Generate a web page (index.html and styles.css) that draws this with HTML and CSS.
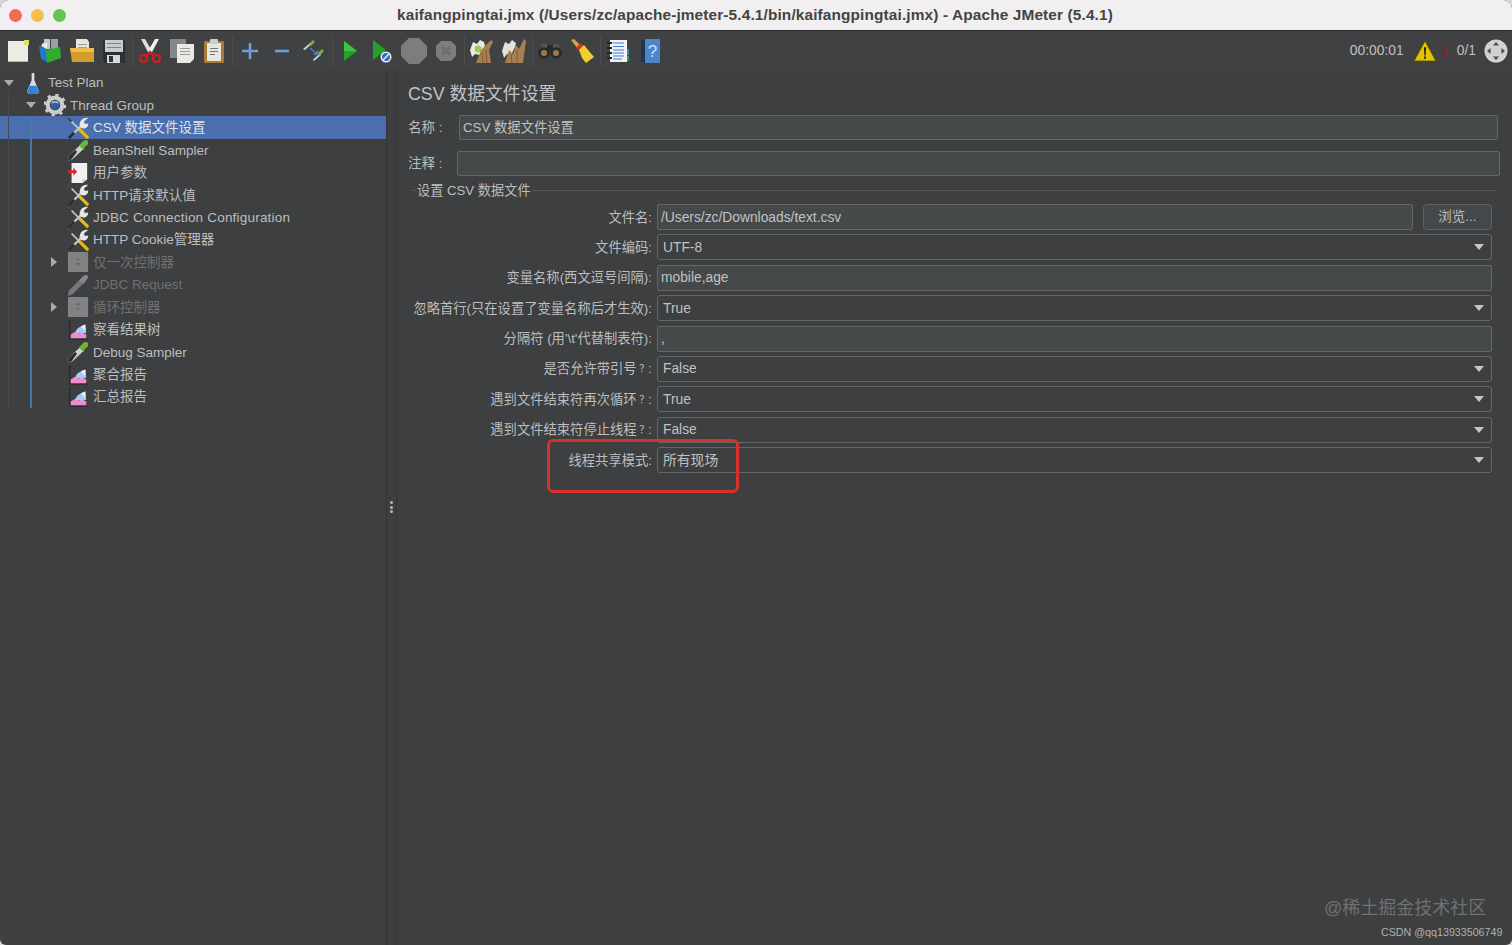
FILE: index.html
```html
<!DOCTYPE html>
<html lang="zh">
<head>
<meta charset="utf-8">
<title>Apache JMeter</title>
<link rel="stylesheet" href="styles.css">
</head>
<body>
<svg class="defs" width="0" height="0" aria-hidden="true">
  <defs>
    <symbol id="i-tools" viewBox="0 0 24 24">
      <path d="M1 1 L12 12" stroke="#c9cbcc" stroke-width="1.800" fill="none"/>
      <path d="M1 1 L5 5" stroke="#333" stroke-width="2" fill="none"/>
      <path d="M13 13 L22 22" stroke="#e8b81a" stroke-width="3.600" stroke-linecap="round" fill="none"/>
      <path d="M3 22 L16 9" stroke="#c6c8c9" stroke-width="2.400" fill="none"/>
      <path d="M3 22 L7 18" stroke="#2c2c2c" stroke-width="3" stroke-linecap="round" fill="none"/>
      <path d="M14 10 C13 5 17 0 23 1 L18.500 5 L19.500 7.500 L23 7 C23.500 12 18 14 15 11.500 Z" fill="#e6e6e6"/>
    </symbol>
    <symbol id="i-dropper" viewBox="0 0 24 24">
      <path d="M14 7 L18 11 L6 22 L1 24 L2 18 Z" fill="#cfd0d0"/>
      <path d="M2 18 L9 12 L11 14 L5 22 L1 24 Z" fill="#2e2e2e"/>
      <path d="M13 7 L18 2 C20 0 24 1 23 4 C23 6 22 7 20 8 L18 12 Z" fill="#6cb33f"/>
    </symbol>
    <symbol id="i-graph" viewBox="0 0 24 24">
      <path d="M3 1 V22 H23" fill="none" stroke="#2b2b2b" stroke-width="1.500"/>
      <path d="M4 21 V17 L9 14 L13 16 L17 15 L21 17 V21 Z" fill="#f08bd0"/>
      <path d="M9 15 C10 10 15 8 20 6 L21 15 L15 16 Z" fill="#a9c8f2"/>
      <path d="M15 8 L20 6 V13 Z" fill="#e6f0ff"/>
    </symbol>
    <symbol id="i-disabled-box" viewBox="0 0 24 24">
      <rect x="1" y="1" width="22" height="22" rx="1" fill="#808283"/>
      <rect x="10" y="8" width="4" height="2" fill="#6a6c6d"/>
      <rect x="10" y="13" width="4" height="2" fill="#6a6c6d"/>
    </symbol>
    <symbol id="i-disabled-dropper" viewBox="0 0 24 24">
      <path d="M14 6 L18 10 L6 22 L1 24 L2 18 Z" fill="#75777a"/>
      <path d="M13 7 L18 2 C20 0 24 1 23 4 L18 11 Z" fill="#85878a"/>
    </symbol>
  </defs>
</svg>
<div class="app">
  <header class="titlebar">
    <div class="lights">
      <span class="light light-red"></span>
      <span class="light light-yellow"></span>
      <span class="light light-green"></span>
    </div>
    <div class="window-title">kaifangpingtai.jmx (/Users/zc/apache-jmeter-5.4.1/bin/kaifangpingtai.jmx) - Apache JMeter (5.4.1)</div>
  </header>

  <div class="toolbar">
    <div class="tool"><svg viewBox="0 0 24 24"><path d="M2 2 H19 L22 5 V23 H2 Z" fill="#ecebe4"/><path d="M18 1 H23 V6 H18 Z" fill="#dfe06a"/><path d="M2 22 H22 V23 H2 Z" fill="#b5b5ad"/></svg></div>
    <div class="tool"><svg viewBox="0 0 24 24"><rect x="6" y="0" width="6" height="10" fill="#c4cacd"/><rect x="13" y="0" width="7" height="10" fill="#9aa1a6"/><path d="M1 7 L9 10 V23 L3 20 Z" fill="#1f78c9"/><path d="M8 11 L22 8 L23 19 L9 24 Z" fill="#2fae2d"/><path d="M5 4 L9 4 L9 10 L3 7 Z" fill="#e8e8e8"/></svg></div>
    <div class="tool"><svg viewBox="0 0 24 24"><path d="M6 0 H17 L19 3 V12 H6 Z" fill="#e8e6dd"/><rect x="8" y="5" width="9" height="1" fill="#a09e95"/><rect x="8" y="8" width="9" height="1" fill="#a09e95"/><path d="M0 9 H24 V23 H2 Z" fill="#d49c28"/><path d="M0 9 H24 V13 H1 Z" fill="#efbe51"/></svg></div>
    <div class="tool"><svg viewBox="0 0 24 24"><path d="M1 1 H23 V24 H3 L1 22 Z" fill="#2c3033"/><rect x="3" y="1" width="18" height="12" fill="#c8ccd2"/><rect x="5" y="4" width="14" height="1" fill="#7d8288"/><rect x="5" y="8" width="14" height="1" fill="#7d8288"/><rect x="5" y="16" width="13" height="8" fill="#d8d8d8"/><rect x="7" y="17" width="4" height="6" fill="#333"/></svg></div>
    <span class="sep"></span>
    <div class="tool"><svg viewBox="0 0 24 24"><path d="M3 0 L7 0 L14 12 L11 15 Z" fill="#dcdcdc"/><path d="M21 0 L17 0 L10 12 L13 15 Z" fill="#f0f0f0"/><circle cx="5.500" cy="19.500" r="3.600" fill="none" stroke="#cc1f1f" stroke-width="2.300"/><circle cx="18.500" cy="19.500" r="3.600" fill="none" stroke="#cc1f1f" stroke-width="2.300"/><path d="M8 17 L12 13 L16 17" fill="none" stroke="#cc1f1f" stroke-width="2.300"/></svg></div>
    <div class="tool"><svg viewBox="0 0 24 24"><rect x="0" y="0" width="16" height="19" fill="#85888a"/><path d="M7 5 H24 V20 L20 24 H7 Z" fill="#e9e9e6"/><rect x="10" y="9" width="10" height="1" fill="#999"/><rect x="10" y="12" width="10" height="1" fill="#999"/><rect x="10" y="15" width="10" height="1" fill="#999"/></svg></div>
    <div class="tool"><svg viewBox="0 0 24 24"><rect x="2" y="2" width="20" height="22" rx="1" fill="#a87a34"/><path d="M5 4 H19 V22 H5 Z" fill="#e8e6df"/><rect x="8" y="0" width="8" height="5" rx="1" fill="#cfcfcb"/><rect x="8" y="9" width="8" height="1" fill="#777"/><rect x="8" y="12" width="8" height="1" fill="#777"/><rect x="8" y="15" width="5" height="1" fill="#777"/></svg></div>
    <span class="sep"></span>
    <div class="tool"><svg viewBox="0 0 24 24"><path d="M12 4 V20 M4 12 H20" stroke="#6d9fe0" stroke-width="2.600" fill="none"/></svg></div>
    <div class="tool"><svg viewBox="0 0 24 24"><path d="M5 12 H19" stroke="#6d9fe0" stroke-width="2.600" fill="none"/></svg></div>
    <div class="tool"><svg viewBox="0 0 24 24"><path d="M1 10 L8 4 L9 5.500 L3 11 Z" fill="#cfd2d2"/><path d="M7 5 L11 1 L13 3 L9 7 Z" fill="#76b04a"/><path d="M12 22 L19 16 L18 14.500 L11 20.500 Z" fill="#cfd2d2"/><path d="M17 17 L22 12 L20 10 L16 14 Z" fill="#76b04a"/><path d="M8 9 L15 15" stroke="#3f7fd0" stroke-width="1.600"/><path d="M16 11 V16 H11 Z" fill="#3f7fd0"/></svg></div>
    <span class="sep"></span>
    <div class="tool"><svg viewBox="0 0 24 24"><path d="M6 2 L19 12 L6 22 Z" fill="#1fa32a"/><path d="M6 2 L19 12 H6 Z" fill="#39c444"/></svg></div>
    <div class="tool"><svg viewBox="0 0 24 24"><path d="M3 1 L16 11 L3 21 Z" fill="#1fa32a"/><circle cx="16" cy="18" r="5.500" fill="#f3f3f3"/><circle cx="16" cy="18" r="4" fill="#2c6fc4"/><path d="M13 21 L19 15" stroke="#e8e8e8" stroke-width="1.600"/></svg></div>
    <div class="tool tool-wide"><svg viewBox="0 0 26 26"><path d="M8 0 H18 L26 8 V18 L18 26 H8 L0 18 V8 Z" fill="#7b7d7e"/></svg></div>
    <div class="tool"><svg viewBox="0 0 24 24"><path d="M7 2 H17 L22 7 V17 L17 22 H7 L2 17 V7 Z" fill="#7b7d7e"/><path d="M8 8 L16 16 M16 8 L8 16" stroke="#6c6e6f" stroke-width="3"/></svg></div>
    <span class="sep"></span>
    <div class="tool"><svg viewBox="0 0 24 24"><path d="M0 11 L3 3 L7 5 L10 1 L14 3 L15 7 L10 16 L5 15 L2 18 Z" fill="#e9e9e3"/><circle cx="8" cy="10" r="3.500" fill="#9ecb54"/><path d="M6 24 L11 11 L21 1 L23 3 L19 11 L21 24 Z" fill="#a67f52"/><path d="M12 14 L13 24 M16 11 L17 24" stroke="#7e5c37" stroke-width="1"/></svg></div>
    <div class="tool"><svg viewBox="0 0 24 24"><path d="M0 12 L3 3 L7 5 L10 1 L14 4 L13 8 L9 16 L5 15 L2 19 Z" fill="#e4e2da"/><path d="M3 24 L7 11 L11 15 L14 6 L17 10 L22 0 L24 2 L21 24 Z" fill="#a67f52"/><path d="M9 15 L10 24 M15 11 L15 24" stroke="#7e5c37" stroke-width="1"/></svg></div>
    <span class="sep"></span>
    <div class="tool"><svg viewBox="0 0 24 24"><rect x="8" y="6" width="8" height="6" fill="#2a2a2a"/><rect x="3" y="5" width="6" height="6" fill="#555"/><rect x="15" y="5" width="6" height="6" fill="#555"/><circle cx="6" cy="14" r="5.800" fill="#2a2a2a"/><circle cx="18" cy="14" r="5.800" fill="#2a2a2a"/><circle cx="6" cy="14" r="3" fill="#9a7a4a"/><circle cx="18" cy="14" r="3" fill="#9a7a4a"/></svg></div>
    <div class="tool"><svg viewBox="0 0 24 24"><path d="M1 1 L4 0 L11 7 L8 10 Z" fill="#d7a93c"/><path d="M6 9 L10 4 L14 7 L10 12 Z" fill="#d42e2e"/><path d="M9 11 L14 6 L24 18 L16 24 L12 19 Z" fill="#f0cd30"/></svg></div>
    <span class="sep"></span>
    <div class="tool"><svg viewBox="0 0 24 24"><rect x="4" y="1" width="17" height="22" fill="#f2f3f5"/><rect x="21" y="10" width="2" height="6" fill="#3f7fd0"/><rect x="21" y="17" width="2" height="5" fill="#3e9b3e"/><path d="M7 4 H18 M7 7.500 H18 M7 11 H18 M7 14 H18 M7 17 H18 M7 20 H16" stroke="#3f7fd0" stroke-width="1.100"/><path d="M1 4 H6 M1 9 H6 M1 14 H6 M1 19 H6" stroke="#222" stroke-width="1.800"/></svg></div>
    <div class="tool"><svg viewBox="0 0 24 24"><path d="M3 2 L7 0 V24 L3 22 Z" fill="#20364f"/><rect x="7" y="0" width="15" height="24" fill="#4a86c9"/><text class="help-mark" x="14.500" y="18">?</text></svg></div>
    <div class="status">
      <span class="timer">00:00:01</span>
      <svg class="warn" viewBox="0 0 24 24"><path d="M12 1 L24 23 H0 Z" fill="#e2c300" stroke="#5a4f00" stroke-width="1"/><path d="M10.800 8 H13.200 L12.700 17 H11.300 Z" fill="#222"/><rect x="11" y="18" width="2" height="2.500" fill="#222"/></svg>
      <span class="err">1</span>
      <span class="count">0/1</span>
      <svg class="globe" viewBox="0 0 24 24"><circle cx="12" cy="12" r="11.500" fill="#d2d2d2"/><path d="M12 3 L15 6.500 H9 Z M12 21 L15 17.500 H9 Z M3 12 L6.500 9 V15 Z M21 12 L17.500 9 V15 Z" fill="#4a4a4a"/></svg>
    </div>
  </div>

  <main class="main">
    <nav class="tree">
      <div class="row d0"><span class="arrow down"></span><span class="node"><svg viewBox="0 0 24 24"><path d="M10.500 1 H13.500 V9 L18 20 C19 23 17 24 15 24 H9 C7 24 5 23 6 20 L10.500 9 Z" fill="#d9dde0"/><path d="M8.500 15 H15.500 L18 21 C18 23 17 24 15 24 H9 C7 24 6 23 6 21 Z" fill="#2f84d6"/></svg></span><span class="name">Test Plan</span></div>
      <div class="row d1"><span class="arrow down"></span><span class="node"><svg viewBox="0 0 24 24"><circle cx="12" cy="12" r="8" fill="none" stroke="#c9ccce" stroke-width="4.500"/><circle cx="12" cy="12" r="11" fill="none" stroke="#c9ccce" stroke-width="3" stroke-dasharray="3.500 5.140"/><circle cx="12" cy="12" r="5" fill="#315f9c"/><path d="M8 11 C10 9 14 9 16 11 L15 8 H9 Z" fill="#a9c6e8"/></svg></span><span class="name">Thread Group</span></div>
      <div class="row d2 selected"><span class="arrow"></span><span class="node"><svg><use href="#i-tools"/></svg></span><span class="name">CSV 数据文件设置</span></div>
      <div class="row d2"><span class="arrow"></span><span class="node"><svg><use href="#i-dropper"/></svg></span><span class="name">BeanShell Sampler</span></div>
      <div class="row d2"><span class="arrow"></span><span class="node"><svg viewBox="0 0 24 24"><path d="M5 1 H22 V19 L17 23 H5 Z" fill="#f1f1f1"/><path d="M22 19 L17 23 V19 Z" fill="#c4c4c4"/><path d="M1 9 H7 V6 L11 10.500 L7 15 V12 H1 Z" fill="#d92626"/></svg></span><span class="name">用户参数</span></div>
      <div class="row d2"><span class="arrow"></span><span class="node"><svg><use href="#i-tools"/></svg></span><span class="name">HTTP请求默认值</span></div>
      <div class="row d2"><span class="arrow"></span><span class="node"><svg><use href="#i-tools"/></svg></span><span class="name name-wide">JDBC Connection Configuration</span></div>
      <div class="row d2"><span class="arrow"></span><span class="node"><svg><use href="#i-tools"/></svg></span><span class="name">HTTP Cookie管理器</span></div>
      <div class="row d2 off"><span class="arrow right"></span><span class="node"><svg><use href="#i-disabled-box"/></svg></span><span class="name">仅一次控制器</span></div>
      <div class="row d2 off"><span class="arrow"></span><span class="node"><svg><use href="#i-disabled-dropper"/></svg></span><span class="name">JDBC Request</span></div>
      <div class="row d2 off"><span class="arrow right"></span><span class="node"><svg><use href="#i-disabled-box"/></svg></span><span class="name">循环控制器</span></div>
      <div class="row d2"><span class="arrow"></span><span class="node"><svg><use href="#i-graph"/></svg></span><span class="name">察看结果树</span></div>
      <div class="row d2"><span class="arrow"></span><span class="node"><svg><use href="#i-dropper"/></svg></span><span class="name">Debug Sampler</span></div>
      <div class="row d2"><span class="arrow"></span><span class="node"><svg><use href="#i-graph"/></svg></span><span class="name">聚合报告</span></div>
      <div class="row d2"><span class="arrow"></span><span class="node"><svg><use href="#i-graph"/></svg></span><span class="name">汇总报告</span></div>
    </nav>

    <div class="splitter"><span class="grip"></span><span class="grip"></span><span class="grip"></span></div>

    <section class="panel">
      <h1 class="panel-title">CSV 数据文件设置</h1>
      <div class="name-row">
        <label class="top-label">名称 :</label>
        <div class="field">CSV 数据文件设置</div>
      </div>
      <div class="comment-row">
        <label class="top-label">注释 :</label>
        <div class="field"></div>
      </div>
      <div class="legend"><span class="legend-text">设置 CSV 数据文件</span><span class="legend-line"></span></div>
      <div class="form">
        <label class="flabel">文件名:</label>
        <div class="with-button"><div class="field">/Users/zc/Downloads/text.csv</div><div class="browse">浏览...</div></div>
        <label class="flabel">文件编码:</label>
        <div class="select">UTF-8</div>
        <label class="flabel">变量名称(西文逗号间隔):</label>
        <div class="field">mobile,age</div>
        <label class="flabel">忽略首行(只在设置了变量名称后才生效):</label>
        <div class="select">True</div>
        <label class="flabel">分隔符 (用'\t'代替制表符):</label>
        <div class="field">,</div>
        <label class="flabel">是否允许带引号 <small class="q">？</small>:</label>
        <div class="select">False</div>
        <label class="flabel">遇到文件结束符再次循环 <small class="q">？</small>:</label>
        <div class="select">True</div>
        <label class="flabel">遇到文件结束符停止线程 <small class="q">？</small>:</label>
        <div class="select">False</div>
        <label class="flabel">线程共享模式:</label>
        <div class="select">所有现场</div>
      </div>
    </section>
  </main>

  <div class="highlight"></div>
  <div class="watermark">@稀土掘金技术社区</div>
  <div class="credit">CSDN @qq13933506749</div>
</div>
</body>
</html>
```

FILE: styles.css
```css
* { box-sizing: border-box; }
html, body { margin: 0; height: 100%; background: #d8d8d8; }
body { font-family: "Liberation Sans", "Noto Sans CJK SC", sans-serif; overflow: hidden; }
.defs { position: absolute; }
.app {
  position: relative;
  width: 1512px;
  height: 945px;
  display: flex;
  flex-direction: column;
  background: #3d3f41;
  color: #bcbebf;
  border-radius: 9px 9px 6px 6px;
  overflow: hidden;
}

.titlebar {
  height: 31px;
  flex: none;
  display: flex;
  align-items: center;
  background: #f1efef;
  border-bottom: 1px solid #26282a;
}
.lights { display: flex; gap: 9px; padding-left: 9px; }
.light { width: 13px; height: 13px; border-radius: 50%; }
.light-red { background: #ee6a5f; }
.light-yellow { background: #f5bd4f; }
.light-green { background: #61c454; }
.window-title {
  flex: 1;
  margin-left: -68px;
  text-align: center;
  font-size: 15.400px;
  font-weight: 700;
  letter-spacing: 0.13px;
  color: #444;
}

.toolbar {
  height: 39px;
  flex: none;
  display: flex;
  align-items: center;
  padding-left: 2px;
  background: #3f4143;
}
.tool { width: 32px; height: 26px; flex: none; display: flex; align-items: center; justify-content: center; }
.tool svg { width: 24px; height: 24px; display: block; }
.tool-wide svg { width: 26px; height: 26px; }
.help-mark { font-size: 17px; fill: #cfe2f7; text-anchor: middle; font-family: "Liberation Sans", sans-serif; }
.sep { width: 4px; height: 30px; flex: none; display: flex; justify-content: center; }
.sep::before { content: ""; width: 1px; background: #4b4d4f; }
.status { margin-left: auto; display: flex; align-items: center; font-size: 13.800px; color: #c0c0c0; padding-right: 4px; }
.timer { margin-right: 9px; }
.warn { width: 24px; height: 22px; }
.err { color: #8e2626; font-weight: 700; margin: 0 8px 0 5px; font-size: 13px; }
.count { margin-right: 8px; }
.globe { width: 24px; height: 24px; }

.main { flex: 1; display: flex; min-height: 0; }

.tree { width: 386px; flex: none; padding-top: 1.600px; position: relative; }
.tree::before {
  content: "";
  position: absolute;
  left: 30px;
  top: 46px;
  width: 2px;
  height: 292px;
  background: #4a76ad;
  z-index: 1;
}
.tree::after {
  content: "";
  position: absolute;
  left: 8px;
  top: 22px;
  width: 1px;
  height: 316px;
  background: #47494b;
}
.row { height: 22.450px; display: flex; align-items: center; font-size: 13.500px; line-height: 16px; white-space: nowrap; }
.name { padding-top: 1px; }
.name-wide { letter-spacing: 0.2px; }
.d0 { padding-left: 4px; }
.d1 { padding-left: 26px; }
.d2 { padding-left: 49px; }
.selected { background: #4b6eaf; color: #dfe3ea; }
.off { color: #6e7071; }
.arrow { width: 10px; height: 10px; flex: none; position: relative; }
.arrow.down::before {
  content: "";
  position: absolute;
  left: 0;
  top: 2px;
  border-left: 5px solid transparent;
  border-right: 5px solid transparent;
  border-top: 6px solid #a9abac;
}
.arrow.right::before {
  content: "";
  position: absolute;
  left: 2px;
  top: 0;
  border-top: 5px solid transparent;
  border-bottom: 5px solid transparent;
  border-left: 6px solid #a9abac;
}
.node { width: 22px; height: 22px; margin-left: 8px; margin-right: 4px; flex: none; display: flex; align-items: center; justify-content: center; }
.node svg { width: 22px; height: 22px; display: block; }

.splitter {
  width: 11px;
  flex: none;
  border-left: 1px solid #333537;
  border-right: 1px solid #333537;
  display: flex;
  flex-direction: column;
  align-items: center;
  gap: 1.500px;
  padding-top: 431px;
}
.grip { width: 3px; height: 3px; border-radius: 50%; background: #b5b7b8; }

.panel { flex: 1; min-width: 0; padding: 12px 12px 0 11px; font-size: 13.500px; line-height: 16px; }
.panel-title { margin: 0; font-size: 17.800px; line-height: 24px; font-weight: 400; color: #c2c4c5; }
.name-row { display: flex; margin: 9px 2px 0 0; height: 25px; align-items: stretch; }
.name-row .top-label { width: 51px; }
.comment-row { display: flex; margin-top: 11px; height: 25px; align-items: stretch; }
.comment-row .top-label { width: 49px; }
.top-label { display: flex; align-items: center; flex: none; }
.field {
  flex: 1;
  min-width: 0;
  background: #45494a;
  border: 1px solid #646668;
  border-radius: 2px;
  padding: 1px 0 0 3px;
  display: flex;
  align-items: center;
  color: #c0c2c3;
  font-size: 13.800px;
}
.name-row .field { font-size: 13.300px; }
.legend { display: flex; align-items: center; height: 18px; margin: 5px 3px 0 4px; font-size: 13.200px; }
.legend::before { content: ""; width: 4px; height: 1px; background: #56585a; }
.legend-text { padding: 1px 2px 0 1px; }
.legend-line { flex: 1; height: 1px; background: #56585a; }
.form {
  display: grid;
  grid-template-columns: 244px 1fr;
  column-gap: 5px;
  grid-auto-rows: 26px;
  row-gap: 4.400px;
  margin: 5px 8px 0 0;
}
.flabel { display: flex; align-items: center; justify-content: flex-end; white-space: pre; font-size: 13.300px; padding-top: 1px; }
.q { font-size: 10px; margin: 0 -1px; }
.with-button { display: flex; gap: 10px; }
.browse {
  width: 69px;
  flex: none;
  border: 1px solid #5f6163;
  border-radius: 4px;
  background: #45484a;
  display: flex;
  align-items: center;
  justify-content: center;
}
.select {
  position: relative;
  border: 1px solid #646668;
  border-radius: 3px;
  background: #3d3f41;
  padding: 1px 0 0 5px;
  display: flex;
  align-items: center;
  color: #c0c2c3;
  font-size: 13.800px;
}
.select::after {
  content: "";
  position: absolute;
  right: 7px;
  top: 9px;
  border-left: 5px solid transparent;
  border-right: 5px solid transparent;
  border-top: 6px solid #c4c6c7;
}

.highlight {
  position: absolute;
  left: 547px;
  top: 439px;
  width: 192px;
  height: 54px;
  border: 3px solid #d8302b;
  border-radius: 6px;
}
.watermark {
  position: absolute;
  left: 1324px;
  top: 896px;
  font-size: 18px;
  line-height: 24px;
  color: #6f7173;
  white-space: nowrap;
}
.credit {
  position: absolute;
  left: 1381px;
  top: 925px;
  font-size: 10.700px;
  line-height: 15px;
  color: #b0b2b3;
  white-space: nowrap;
}
```
